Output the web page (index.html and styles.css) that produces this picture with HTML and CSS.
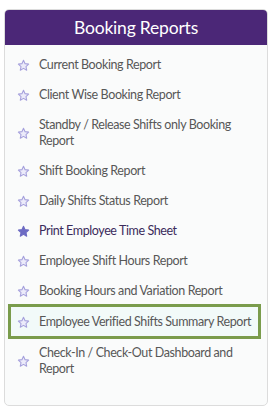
FILE: index.html
```html
<!DOCTYPE html>
<html lang="en">
<head>
    <meta charset="utf-8">
    <meta name="viewport" content="width=device-width, initial-scale=1.0">
    <title>Booking Reports</title>
    <link rel="stylesheet" href="styles.css">
</head>
<body>
    <div class="panel">
        <h2 class="panel-title">Booking Reports</h2>
        <ul class="report-list">
            <li><svg class="star" viewBox="0 0 24 24"><path d="M12 2.5l2.9 6.1 6.6.8-4.9 4.6 1.3 6.6L12 17.3l-5.9 3.3 1.3-6.6-4.9-4.6 6.6-.8z"/></svg><a href="#">Current Booking Report</a></li>
            <li><svg class="star" viewBox="0 0 24 24"><path d="M12 2.5l2.9 6.1 6.6.8-4.9 4.6 1.3 6.6L12 17.3l-5.9 3.3 1.3-6.6-4.9-4.6 6.6-.8z"/></svg><a href="#">Client Wise Booking Report</a></li>
            <li><svg class="star" viewBox="0 0 24 24"><path d="M12 2.5l2.9 6.1 6.6.8-4.9 4.6 1.3 6.6L12 17.3l-5.9 3.3 1.3-6.6-4.9-4.6 6.6-.8z"/></svg><a href="#">Standby / Release Shifts only Booking Report</a></li>
            <li><svg class="star" viewBox="0 0 24 24"><path d="M12 2.5l2.9 6.1 6.6.8-4.9 4.6 1.3 6.6L12 17.3l-5.9 3.3 1.3-6.6-4.9-4.6 6.6-.8z"/></svg><a href="#">Shift Booking Report</a></li>
            <li><svg class="star" viewBox="0 0 24 24"><path d="M12 2.5l2.9 6.1 6.6.8-4.9 4.6 1.3 6.6L12 17.3l-5.9 3.3 1.3-6.6-4.9-4.6 6.6-.8z"/></svg><a href="#">Daily Shifts Status Report</a></li>
            <li class="active"><svg class="star" viewBox="0 0 24 24"><path d="M12 2.5l2.9 6.1 6.6.8-4.9 4.6 1.3 6.6L12 17.3l-5.9 3.3 1.3-6.6-4.9-4.6 6.6-.8z"/></svg><a href="#">Print Employee Time Sheet</a></li>
            <li><svg class="star" viewBox="0 0 24 24"><path d="M12 2.5l2.9 6.1 6.6.8-4.9 4.6 1.3 6.6L12 17.3l-5.9 3.3 1.3-6.6-4.9-4.6 6.6-.8z"/></svg><a href="#">Employee Shift Hours Report</a></li>
            <li><svg class="star" viewBox="0 0 24 24"><path d="M12 2.5l2.9 6.1 6.6.8-4.9 4.6 1.3 6.6L12 17.3l-5.9 3.3 1.3-6.6-4.9-4.6 6.6-.8z"/></svg><a href="#">Booking Hours and Variation Report</a></li>
            <li class="marked"><svg class="star" viewBox="0 0 24 24"><path d="M12 2.5l2.9 6.1 6.6.8-4.9 4.6 1.3 6.6L12 17.3l-5.9 3.3 1.3-6.6-4.9-4.6 6.6-.8z"/></svg><a href="#">Employee Verified Shifts Summary Report</a></li>
            <li><svg class="star" viewBox="0 0 24 24"><path d="M12 2.5l2.9 6.1 6.6.8-4.9 4.6 1.3 6.6L12 17.3l-5.9 3.3 1.3-6.6-4.9-4.6 6.6-.8z"/></svg><a href="#">Check-In / Check-Out Dashboard and Report</a></li>
        </ul>
    </div>
</body>
</html>
```

FILE: styles.css
```css
body {
    margin: 0;
    padding: 9px 7px 0 4px;
    background-color: #ffffff;
    font-family: Lato, "Open Sans", sans-serif;
}

.panel {
    height: 397px;
    box-sizing: border-box;
    border: 1px solid #dcdcdc;
    border-radius: 5px;
    background-color: #fafbfb;
    overflow: hidden;
}

.panel-title {
    margin: 0;
    height: 35px;
    line-height: 35px;
    text-align: center;
    font-size: 17.5px;
    letter-spacing: -0.2px;
    font-weight: normal;
    color: #ffffff;
    background-color: #4b2777;
}

.report-list {
    list-style: none;
    margin: 0;
    padding: 5px 0 0 0;
}

.report-list li {
    display: flex;
    align-items: center;
    padding: 7px 26px 7px 12px;
    font-size: 12.5px;
    line-height: 16px;
    letter-spacing: -0.4px;
}

.report-list a {
    color: #575757;
    text-decoration: none;
}

.star {
    flex: none;
    width: 13px;
    height: 13px;
    margin-right: 9px;
    fill: #ecebfa;
    stroke: #a6a1dc;
    stroke-width: 2;
    stroke-linejoin: round;
}

.report-list li.active a {
    color: #3b2b5c;
}

.report-list li.active .star {
    fill: #6d6bc3;
    stroke: #6d6bc3;
}

.report-list li.marked {
    margin: -2px 6px -1px 3px;
    padding: 7px 0 6px 6px;
    border: 3px solid #7a9c4c;
    background-color: #f2faf9;
    white-space: nowrap;
}
```
